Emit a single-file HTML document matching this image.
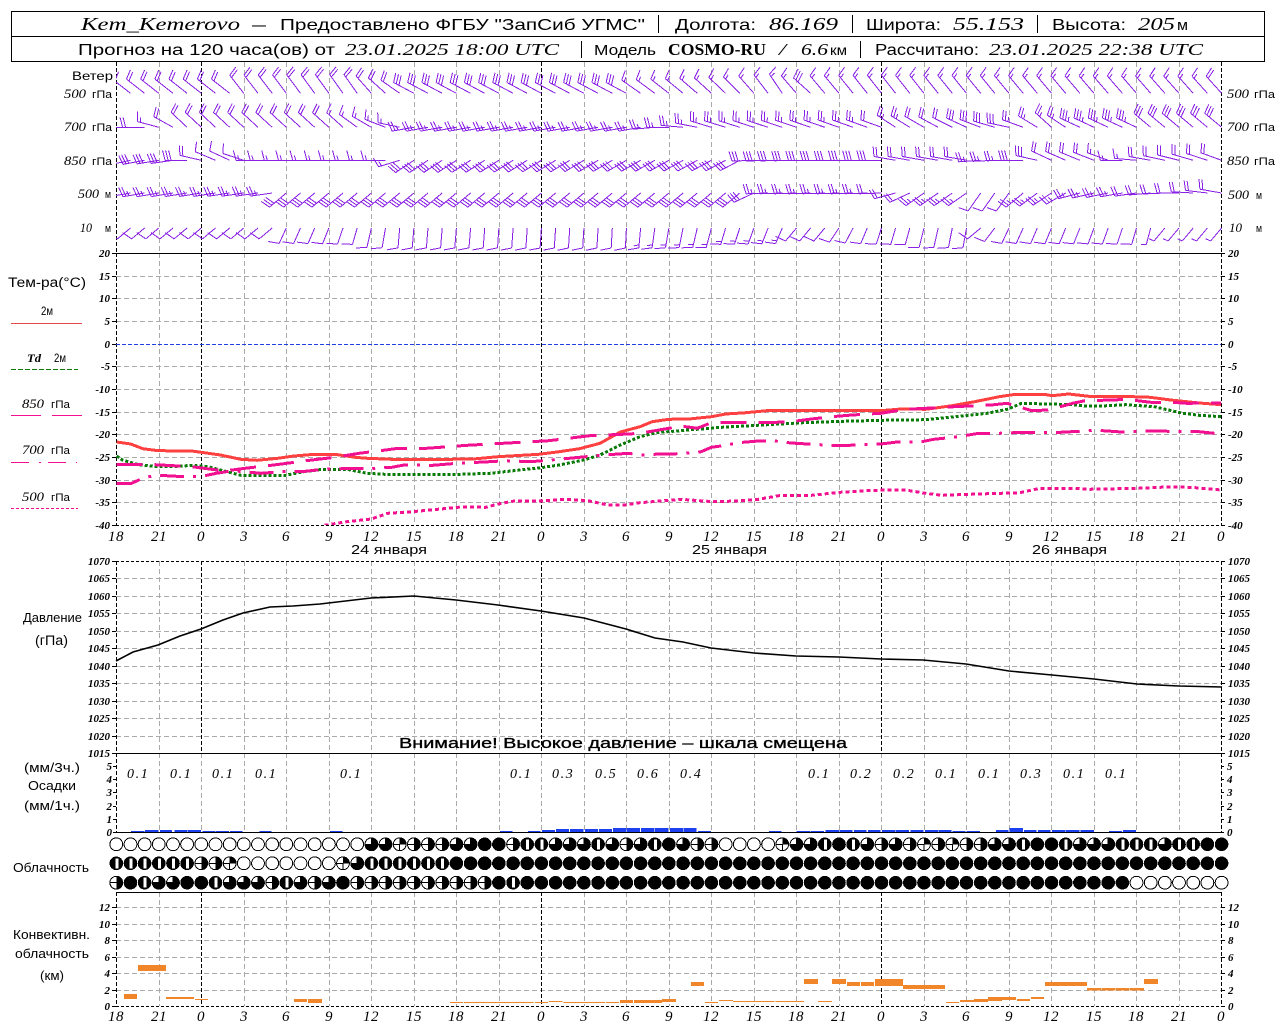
<!DOCTYPE html>
<html><head><meta charset="utf-8"><title>Kem_Kemerovo</title>
<style>
html,body{margin:0;padding:0;background:#fff}
svg{display:block}
text{fill:#000;white-space:pre}
.s{font-family:"Liberation Sans",sans-serif}
.i{font-family:"Liberation Serif",serif;font-style:italic}
.n{font-family:"Liberation Serif",serif;font-style:italic;font-weight:bold;font-size:11px}
.h{font-family:"Liberation Serif",serif;font-style:italic;font-size:15px;text-anchor:middle;letter-spacing:.5px}
.b{font-family:"Liberation Serif",serif;font-weight:bold}
.e{text-anchor:end}
.v{letter-spacing:1.6px}
</style></head><body>
<svg xmlns="http://www.w3.org/2000/svg" width="1280" height="1024" viewBox="0 0 1280 1024">
<defs><clipPath id="cw"><rect x="116" y="62" width="1106" height="190"/></clipPath>
<clipPath id="ct"><rect x="116" y="253" width="1106" height="272"/></clipPath></defs>
<rect width="1280" height="1024" fill="#fff"/>
<g id="grid" shape-rendering="crispEdges"></g>
<g id="data"></g>

<!-- header -->
<g shape-rendering="crispEdges" fill="none" stroke="#000">
<rect x="11.5" y="11.5" width="1253" height="50"/>
<line x1="11" y1="36.5" x2="1265" y2="36.5"/>
<line x1="658.5" y1="15" x2="658.5" y2="33"/><line x1="852.5" y1="15" x2="852.5" y2="33"/><line x1="1037.5" y1="15" x2="1037.5" y2="33"/>
<line x1="581.5" y1="41" x2="581.5" y2="58"/><line x1="860.5" y1="41" x2="860.5" y2="58"/>
</g>
<text class="i" x="81" y="30" font-size="18" textLength="159" lengthAdjust="spacingAndGlyphs">Kem_Kemerovo</text>
<text class="s" x="252" y="30" font-size="16" textLength="14" lengthAdjust="spacingAndGlyphs">–</text>
<text class="s" x="280" y="30" font-size="16" textLength="365" lengthAdjust="spacingAndGlyphs">Предоставлено ФГБУ "ЗапСиб УГМС"</text>
<text class="s" x="675" y="30" font-size="16" textLength="81" lengthAdjust="spacingAndGlyphs">Долгота:</text>
<text class="i" x="769" y="30" font-size="18" textLength="69" lengthAdjust="spacingAndGlyphs">86.169</text>
<text class="s" x="866" y="30" font-size="16" textLength="75" lengthAdjust="spacingAndGlyphs">Широта:</text>
<text class="i" x="953" y="30" font-size="18" textLength="71" lengthAdjust="spacingAndGlyphs">55.153</text>
<text class="s" x="1052" y="30" font-size="16" textLength="74" lengthAdjust="spacingAndGlyphs">Высота:</text>
<text class="i" x="1138" y="30" font-size="18" textLength="37" lengthAdjust="spacingAndGlyphs">205</text>
<text class="s" x="1177" y="30" font-size="15" textLength="11" lengthAdjust="spacingAndGlyphs">м</text>

<text class="s" x="78" y="55" font-size="15.5" textLength="257" lengthAdjust="spacingAndGlyphs">Прогноз на 120 часа(ов) от</text>
<text class="i" x="345" y="55" font-size="17" textLength="214" lengthAdjust="spacingAndGlyphs">23.01.2025 18:00 UTC</text>
<text class="s" x="594" y="55" font-size="15" textLength="62" lengthAdjust="spacingAndGlyphs">Модель</text>
<text class="b" x="668" y="55" font-size="16.5" textLength="98" lengthAdjust="spacingAndGlyphs">COSMO-RU</text>
<text class="i" x="779" y="55" font-size="17" textLength="7" lengthAdjust="spacingAndGlyphs">/</text>
<text class="i" x="801" y="55" font-size="17" textLength="27" lengthAdjust="spacingAndGlyphs">6.6</text>
<text class="s" x="830" y="55" font-size="14" textLength="17" lengthAdjust="spacingAndGlyphs">км</text>
<text class="s" x="875" y="55" font-size="15.5" textLength="104" lengthAdjust="spacingAndGlyphs">Рассчитано:</text>
<text class="i" x="989" y="55" font-size="17" textLength="214" lengthAdjust="spacingAndGlyphs">23.01.2025 22:38 UTC</text>

<!-- wind labels -->
<text class="s" x="72" y="80" font-size="12" textLength="41" lengthAdjust="spacingAndGlyphs">Ветер</text>
<text class="i" x="64" y="98" font-size="12.5" textLength="22" lengthAdjust="spacingAndGlyphs">500</text><text class="s" x="92" y="98" font-size="11" textLength="20" lengthAdjust="spacingAndGlyphs">гПа</text>
<text class="i" x="64" y="131" font-size="12.5" textLength="22" lengthAdjust="spacingAndGlyphs">700</text><text class="s" x="92" y="131" font-size="11" textLength="20" lengthAdjust="spacingAndGlyphs">гПа</text>
<text class="i" x="64" y="165" font-size="12.5" textLength="22" lengthAdjust="spacingAndGlyphs">850</text><text class="s" x="92" y="165" font-size="11" textLength="20" lengthAdjust="spacingAndGlyphs">гПа</text>
<text class="i" x="78" y="198" font-size="12.5" textLength="21" lengthAdjust="spacingAndGlyphs">500</text><text class="s" x="105" y="198" font-size="11" textLength="6" lengthAdjust="spacingAndGlyphs">м</text>
<text class="i" x="80" y="232" font-size="12.5" textLength="12" lengthAdjust="spacingAndGlyphs">10</text><text class="s" x="105" y="232" font-size="11" textLength="6" lengthAdjust="spacingAndGlyphs">м</text>
<text class="i" x="1227" y="98" font-size="12.5" textLength="22" lengthAdjust="spacingAndGlyphs">500</text><text class="s" x="1254" y="98" font-size="11" textLength="21" lengthAdjust="spacingAndGlyphs">гПа</text>
<text class="i" x="1227" y="131" font-size="12.5" textLength="22" lengthAdjust="spacingAndGlyphs">700</text><text class="s" x="1254" y="131" font-size="11" textLength="21" lengthAdjust="spacingAndGlyphs">гПа</text>
<text class="i" x="1227" y="165" font-size="12.5" textLength="22" lengthAdjust="spacingAndGlyphs">850</text><text class="s" x="1254" y="165" font-size="11" textLength="21" lengthAdjust="spacingAndGlyphs">гПа</text>
<text class="i" x="1228" y="199" font-size="12.5" textLength="21" lengthAdjust="spacingAndGlyphs">500</text><text class="s" x="1256" y="199" font-size="11" textLength="6" lengthAdjust="spacingAndGlyphs">м</text>
<text class="i" x="1229" y="232" font-size="12.5" textLength="13" lengthAdjust="spacingAndGlyphs">10</text><text class="s" x="1256" y="232" font-size="11" textLength="6" lengthAdjust="spacingAndGlyphs">м</text>

<!-- temp legend -->
<text class="s" x="8" y="287" font-size="13.5" textLength="78" lengthAdjust="spacingAndGlyphs">Тем-ра(°С)</text>
<text class="s" x="41" y="315" font-size="11.5" textLength="12" lengthAdjust="spacingAndGlyphs">2м</text>
<text class="i" font-weight="bold" x="27" y="362" font-size="12" textLength="14" lengthAdjust="spacingAndGlyphs">Td</text><text class="s" x="54" y="362" font-size="11.5" textLength="12" lengthAdjust="spacingAndGlyphs">2м</text>
<text class="i" x="22" y="408" font-size="12.5" textLength="22" lengthAdjust="spacingAndGlyphs">850</text><text class="s" x="51" y="408" font-size="11" textLength="19" lengthAdjust="spacingAndGlyphs">гПа</text>
<text class="i" x="22" y="454" font-size="12.5" textLength="22" lengthAdjust="spacingAndGlyphs">700</text><text class="s" x="51" y="454" font-size="11" textLength="19" lengthAdjust="spacingAndGlyphs">гПа</text>
<text class="i" x="22" y="501" font-size="12.5" textLength="22" lengthAdjust="spacingAndGlyphs">500</text><text class="s" x="51" y="501" font-size="11" textLength="19" lengthAdjust="spacingAndGlyphs">гПа</text>
<g shape-rendering="crispEdges" fill="none">
<line x1="11" x2="82" y1="323.5" y2="323.5" stroke="#e84848"/>
<line x1="11" x2="78" y1="369.5" y2="369.5" stroke="#087a08" stroke-dasharray="5 2"/>
<line x1="11" x2="41" y1="415.5" y2="415.5" stroke="#f01090"/><line x1="52" x2="82" y1="415.5" y2="415.5" stroke="#f01090"/>
<line x1="11" x2="77" y1="462.5" y2="462.5" stroke="#f01090" stroke-dasharray="18 10 2 7"/>
<line x1="11" x2="78" y1="508.5" y2="508.5" stroke="#f01090" stroke-dasharray="3 2"/>
</g>

<!-- temp axis -->
<g class="n e">
<text x="110" y="257">20</text><text x="110" y="280">15</text><text x="110" y="302">10</text><text x="110" y="325">5</text><text x="110" y="348">0</text><text x="110" y="370">-5</text><text x="110" y="393">-10</text><text x="110" y="416">-15</text><text x="110" y="438">-20</text><text x="110" y="461">-25</text><text x="110" y="484">-30</text><text x="110" y="506">-35</text><text x="110" y="529">-40</text>
</g>
<g class="n">
<text x="1228" y="257">20</text><text x="1228" y="280">15</text><text x="1228" y="302">10</text><text x="1228" y="325">5</text><text x="1228" y="348">0</text><text x="1228" y="370">-5</text><text x="1228" y="393">-10</text><text x="1228" y="416">-15</text><text x="1228" y="438">-20</text><text x="1228" y="461">-25</text><text x="1228" y="484">-30</text><text x="1228" y="506">-35</text><text x="1228" y="529">-40</text>
</g>

<!-- hours under temperature -->
<g class="h">
<text x="116" y="541">18</text><text x="159" y="541">21</text><text x="201" y="541">0</text><text x="244" y="541">3</text><text x="286" y="541">6</text><text x="329" y="541">9</text><text x="371" y="541">12</text><text x="414" y="541">15</text><text x="456" y="541">18</text><text x="499" y="541">21</text><text x="541" y="541">0</text><text x="584" y="541">3</text><text x="626" y="541">6</text><text x="669" y="541">9</text><text x="711" y="541">12</text><text x="754" y="541">15</text><text x="796" y="541">18</text><text x="839" y="541">21</text><text x="881" y="541">0</text><text x="924" y="541">3</text><text x="966" y="541">6</text><text x="1009" y="541">9</text><text x="1051" y="541">12</text><text x="1094" y="541">15</text><text x="1136" y="541">18</text><text x="1179" y="541">21</text><text x="1221" y="541">0</text>
</g>
<text class="s" x="351" y="554" font-size="13" textLength="76" lengthAdjust="spacingAndGlyphs">24 января</text>
<text class="s" x="692" y="554" font-size="13" textLength="75" lengthAdjust="spacingAndGlyphs">25 января</text>
<text class="s" x="1032" y="554" font-size="13" textLength="75" lengthAdjust="spacingAndGlyphs">26 января</text>

<!-- pressure -->
<text class="s" x="23" y="622" font-size="13" textLength="59" lengthAdjust="spacingAndGlyphs">Давление</text>
<text class="s" x="35" y="645" font-size="13.5" textLength="33" lengthAdjust="spacingAndGlyphs">(гПа)</text>
<g class="n e">
<text x="110" y="565">1070</text><text x="110" y="582">1065</text><text x="110" y="600">1060</text><text x="110" y="617">1055</text><text x="110" y="635">1050</text><text x="110" y="652">1045</text><text x="110" y="670">1040</text><text x="110" y="687">1035</text><text x="110" y="705">1030</text><text x="110" y="722">1025</text><text x="110" y="740">1020</text><text x="110" y="757">1015</text>
</g>
<g class="n">
<text x="1228" y="565">1070</text><text x="1228" y="582">1065</text><text x="1228" y="600">1060</text><text x="1228" y="617">1055</text><text x="1228" y="635">1050</text><text x="1228" y="652">1045</text><text x="1228" y="670">1040</text><text x="1228" y="687">1035</text><text x="1228" y="705">1030</text><text x="1228" y="722">1025</text><text x="1228" y="740">1020</text><text x="1228" y="757">1015</text>
</g>
<text class="s" x="399" y="748" font-size="15" stroke="#000" stroke-width=".35" textLength="448" lengthAdjust="spacingAndGlyphs">Внимание! Высокое давление – шкала смещена</text>

<!-- precipitation -->
<text class="s" x="24" y="772" font-size="13" textLength="56" lengthAdjust="spacingAndGlyphs">(мм/3ч.)</text>
<text class="s" x="28" y="790" font-size="13" textLength="48" lengthAdjust="spacingAndGlyphs">Осадки</text>
<text class="s" x="24" y="810" font-size="13" textLength="56" lengthAdjust="spacingAndGlyphs">(мм/1ч.)</text>
<g class="n e">
<text x="112" y="770">5</text><text x="112" y="783">4</text><text x="112" y="796">3</text><text x="112" y="810">2</text><text x="112" y="823">1</text><text x="112" y="836">0</text>
</g>
<g class="n">
<text x="1227" y="770">5</text><text x="1227" y="783">4</text><text x="1227" y="796">3</text><text x="1227" y="810">2</text><text x="1227" y="823">1</text><text x="1227" y="836">0</text>
</g>
<g class="i v" font-size="14">
<text x="127" y="778">0.1</text><text x="170" y="778">0.1</text><text x="212" y="778">0.1</text><text x="255" y="778">0.1</text><text x="340" y="778">0.1</text><text x="510" y="778">0.1</text><text x="552" y="778">0.3</text><text x="595" y="778">0.5</text><text x="637" y="778">0.6</text><text x="680" y="778">0.4</text><text x="808" y="778">0.1</text><text x="850" y="778">0.2</text><text x="893" y="778">0.2</text><text x="935" y="778">0.1</text><text x="978" y="778">0.1</text><text x="1020" y="778">0.3</text><text x="1063" y="778">0.1</text><text x="1105" y="778">0.1</text>
</g>

<text class="s" x="13" y="872" font-size="13" textLength="76" lengthAdjust="spacingAndGlyphs">Облачность</text>

<!-- convective -->
<text class="s" x="13" y="939" font-size="12.5" textLength="77" lengthAdjust="spacingAndGlyphs">Конвективн.</text>
<text class="s" x="15" y="958" font-size="12.5" textLength="74" lengthAdjust="spacingAndGlyphs">облачность</text>
<text class="s" x="40" y="980" font-size="13" textLength="24" lengthAdjust="spacingAndGlyphs">(км)</text>
<g class="n e">
<text x="110" y="911">12</text><text x="110" y="928">10</text><text x="110" y="944">8</text><text x="110" y="961">6</text><text x="110" y="977">4</text><text x="110" y="994">2</text><text x="110" y="1010">0</text>
</g>
<g class="n">
<text x="1228" y="911">12</text><text x="1228" y="928">10</text><text x="1228" y="944">8</text><text x="1228" y="961">6</text><text x="1228" y="977">4</text><text x="1228" y="994">2</text><text x="1228" y="1010">0</text>
</g>
<g class="h">
<text x="116" y="1021">18</text><text x="159" y="1021">21</text><text x="201" y="1021">0</text><text x="244" y="1021">3</text><text x="286" y="1021">6</text><text x="329" y="1021">9</text><text x="371" y="1021">12</text><text x="414" y="1021">15</text><text x="456" y="1021">18</text><text x="499" y="1021">21</text><text x="541" y="1021">0</text><text x="584" y="1021">3</text><text x="626" y="1021">6</text><text x="669" y="1021">9</text><text x="711" y="1021">12</text><text x="754" y="1021">15</text><text x="796" y="1021">18</text><text x="839" y="1021">21</text><text x="881" y="1021">0</text><text x="924" y="1021">3</text><text x="966" y="1021">6</text><text x="1009" y="1021">9</text><text x="1051" y="1021">12</text><text x="1094" y="1021">15</text><text x="1136" y="1021">18</text><text x="1179" y="1021">21</text><text x="1221" y="1021">0</text>
</g>
</svg>
<script>
(function(){
var G='',D='';
function L(x1,y1,x2,y2,c,d){return '<line x1="'+x1+'" y1="'+y1+'" x2="'+x2+'" y2="'+y2+'" stroke="'+c+'"'+(d?' stroke-dasharray="'+d+'"':'')+'/>';}
function vx(k){return Math.round(116.3+42.5*k)+.5;}
var bands=[[62,253],[253,525],[561,753],[753,832],[892,1006]];
var i,k,v,y;
/* horizontal grid */
for(v=15;v>=-35;v-=5){ if(v==0)continue; y=Math.round(343.7-v*4.533)+.5; G+=L(116,y,1221,y,'#aaa','5 3'); }
for(v=1;v<=10;v++){ y=Math.round(561+v*17.45)+.5; G+=L(116,y,1221,y,'#aaa','5 3'); }
for(v=2;v<=12;v+=2){ y=Math.round(1006-v*8.25)+.5; G+=L(116,y,1221,y,'#aaa','5 3'); }
/* vertical grid */
bands.forEach(function(b){
 for(k=0;k<=26;k++){
  var blk=(k==0||k==2||k==10||k==18||k==26);
  if(b[0]==753&&blk&&k!=0&&k!=26){G+=L(vx(k),b[0],vx(k),b[1],'#aaa','5 3');continue;}
  G+=L(vx(k),b[0],vx(k),b[1],blk?'#000':'#aaa',blk?'4 2':'5 3');
 }
});
/* zero */
G+=L(116,344.5,1221,344.5,'#2040e0','4 2');
/* frames */
G+=L(116,253.5,1222,253.5,'#000');
G+=L(116,525.5,1222,525.5,'#000','3 2');
G+=L(116,561.5,1222,561.5,'#000','3 2');
G+=L(116,753.5,1222,753.5,'#000');
G+=L(116,832.5,1222,832.5,'#000');
G+=L(116,892.5,1222,892.5,'#000');
G+=L(116,1006.5,1222,1006.5,'#000','3 2');
/* axis ticks */
for(v=20;v>=-40;v-=5){y=Math.round(343.7-v*4.533)+.5;G+=L(112,y,116,y,'#000')+L(1221,y,1225,y,'#000');}
for(v=0;v<=11;v++){y=Math.round(561+v*17.45)+.5;G+=L(112,y,116,y,'#000')+L(1221,y,1225,y,'#000');}
for(v=0;v<=5;v++){y=Math.round(832-v*13.2)+.5;G+=L(113,y,116,y,'#000')+L(1221,y,1224,y,'#000');}
for(v=0;v<=12;v+=2){y=Math.round(1006-v*8.25)+.5;G+=L(112,y,116,y,'#000')+L(1221,y,1225,y,'#000');}
document.getElementById('grid').innerHTML=G;

/* wind barbs */
function barbs(by,keys,base){
 var out='',idx=0;
 for(var i=1;i<=78;i++){
  while(idx<keys.length-1&&keys[idx+1][0]<=i)idx++;
  var a=keys[idx],b=keys[Math.min(idx+1,keys.length-1)],ang=a[1];
  if(b[0]>a[0])ang=a[1]+(b[1]-a[1])*(i-a[0])/(b[0]-a[0]);
  var f=a[2],x=116.3+14.17*i,len=base;
  if(by>220)len=ang<105?20:17;
  var r=ang*Math.PI/180,dx=Math.cos(r),dy=Math.sin(r);
  var ex=x+dx*len,ey=by+dy*len;
  var p='M'+x.toFixed(1)+' '+by+'L'+ex.toFixed(1)+' '+ey.toFixed(1);
  var r2=(ang+75)*Math.PI/180,fx=Math.cos(r2),fy=Math.sin(r2);
  var pos=0,full=Math.floor(f/2),hf=f%2,fl=by>220?11:10;
  for(var n=0;n<full+hf;n++){
    var sx=ex-dx*pos,sy=ey-dy*pos,l=n<full?fl:fl/2;
    p+='M'+sx.toFixed(1)+' '+sy.toFixed(1)+'L'+(sx+fx*l).toFixed(1)+' '+(sy+fy*l).toFixed(1);
    pos+=3;
  }
  out+=p;
 }
 return out;
}
var w500=[[1,218,4],[8,218,4],[9,232,4],[17,235,4],[19,222,4],[21,208,6],[36,208,6],[37,215,3],[44,225,3],[47,236,3],[49,222,6],[50,230,3],[54,232,3],[78,228,4]];
var w700=[[1,180,6],[2,180,4],[3,195,3],[4,209,4],[5,223,4],[16,222,3],[18,210,3],[20,192,3],[21,170,5],[37,170,5],[40,185,5],[42,197,5],[54,200,4],[55,213,5],[57,210,4],[60,205,6],[63,192,6],[64,200,5],[66,222,5],[68,205,7],[72,205,7],[73,220,6],[78,220,6]];
var w850=[[1,168,6],[4,172,6],[5,180,6],[6,193,4],[7,203,2],[8,205,2],[9,198,2],[10,180,3],[19,180,3],[21,146,6],[44,152,6],[45,178,6],[54,180,6],[55,190,4],[60,190,4],[61,176,5],[64,180,6],[66,205,4],[70,200,3],[71,180,3],[73,190,4],[78,200,4]];
var wm=[[1,170,5],[11,172,5],[12,140,6],[44,140,6],[45,155,6],[46,178,5],[54,178,4],[55,165,4],[57,145,5],[60,145,5],[61,125,2],[63,125,2],[64,140,5],[67,150,5],[68,165,5],[72,172,4],[75,180,4],[78,190,4]];
var w10=[[1,140,2],[11,140,2],[12,115,2],[15,112,2],[19,100,2],[20,95,2],[36,93,2],[37,95,3],[39,100,3],[47,113,3],[48,130,2],[50,130,2],[52,118,2],[54,108,2],[60,100,2],[61,140,2],[63,115,2],[70,110,2],[73,105,1],[74,130,1],[78,130,1]];
D+='<path clip-path="url(#cw)" shape-rendering="crispEdges" fill="none" stroke="#8a1fe6" stroke-width="1" d="'+barbs(93.3,w500,23)+barbs(127.3,w700,22)+barbs(160.3,w850,22)+barbs(193,wm,22)+barbs(228,w10,17)+'"/>';

/* series helpers */
function P(a,off){var s=[];for(var i=0;i<a.length;i+=2){s.push((off+a[i]/2.45).toFixed(1)+','+(370+a[i+1]/3).toFixed(1));}return s.join(' ');}
function S(a3,a4,c,w,d){return '<polyline clip-path="url(#ct)" shape-rendering="crispEdges" fill="none" stroke="'+c+'" stroke-width="'+w+'"'+(d?' stroke-dasharray="'+d+'"':'')+' points="'+P(a3,0)+' '+P(a4,640)+'"/>';}
var red3=[286,216,320,222,350,236,380,241,420,243,470,243,500,248,540,255,590,268,630,271,680,265,720,258,770,253,820,253,870,262,900,265,960,268,1100,268,1160,267,1220,260,1320,253,1370,245,1420,236,1470,220,1520,186,1568,170];
var red4=[30,155,70,148,120,147,175,140,210,132,260,128,310,122,590,122,640,117,700,118,760,108,820,95,880,80,920,73,990,73,1010,77,1050,72,1100,79,1180,79,1250,82,1300,90,1370,99,1424,104];
var gr3=[286,258,300,270,340,284,380,289,440,289,470,286,510,290,540,300,590,316,700,316,740,306,790,298,850,298,900,310,960,314,1100,314,1200,310,1320,294,1370,285,1430,270,1470,255,1520,225,1568,200];
var gr4=[40,188,140,178,200,172,300,165,400,158,500,154,590,151,700,149,770,140,850,130,900,118,935,100,1000,102,1060,104,1090,108,1130,108,1190,104,1260,110,1330,130,1370,136,1424,140];
var a3=[286,283,380,284,470,290,550,303,600,295,650,288,690,282,750,272,820,262,880,250,945,240,975,235,1045,235,1145,226,1245,219,1345,212,1445,197,1540,192];
var a4=[0,190,70,175,100,168,140,175,175,158,270,158,310,158,370,155,420,147,470,140,520,135,590,130,650,118,700,115,770,110,860,105,900,100,960,122,1000,120,1060,100,1090,92,1160,90,1190,88,1260,98,1290,96,1340,100,1424,99];
var b3=[286,341,320,341,355,322,390,316,450,320,490,320,530,310,570,302,640,310,690,305,740,305,790,298,840,296,900,296,960,292,990,285,1060,286,1120,280,1200,275,1240,272,1300,275,1350,270,1420,262,1480,255,1540,250,1568,255];
var b4=[50,252,80,252,130,248,150,245,175,232,210,226,240,218,290,213,325,212,370,219,440,224,490,227,590,222,630,216,690,215,720,208,780,200,830,190,880,190,940,187,1030,187,1120,181,1180,186,1240,183,1300,184,1360,184,1424,192];
var c3=[795,466,850,455,910,447,950,430,1010,425,1080,417,1130,411,1190,412,1220,402,1260,393,1320,393,1390,388,1440,392,1490,405,1530,405,1568,398];
var c4=[100,388,180,395,240,393,290,388,340,377,420,376,490,367,570,361,650,360,700,370,740,376,830,372,930,368,975,356,1060,355,1100,358,1220,355,1290,351,1350,352,1424,360];
D+=S(red3,red4,'#ff4040',3);
D+=S(gr3,gr4,'#087a08',3,'3 2');
D+=S(c3,c4,'#f01090',3,'4 3');
D+=S(b3,b4,'#f01090',3,'24 9 3 9');
D+=S(a3,a4,'#f01090',3,'26 12');

/* pressure */
D+='<polyline fill="none" stroke="#000" stroke-width="1.6" points="116,661 133,652 158,645 180,636 201,629 223,620 243,613 270,607 293,606 320,604 371,598 414,596 456,600 498,605 541,611 584,618 626,629 655,638 683,642 711,648 754,653 796,656 839,657 881,659 923,660 966,664 1009,671 1052,675 1094,679 1137,684 1179,686 1222,687"/>';

/* precip bars */
var R='';
function bars(off,arr){for(var i=0;i<arr.length;i+=3){R+='<rect x="'+(off+arr[i]/3).toFixed(1)+'" y="'+(832-arr[i+2])+'" width="'+((arr[i+1]-arr[i])/3).toFixed(1)+'" height="'+arr[i+2]+'"/>';}}
bars(0,[393,433,1,435,475,2,480,516,2,523,562,2,564,603,2,607,645,1,647,687,1,690,728,1,778,815,1,990,1028,1]);
bars(420,[240,278,1,324,362,1,366,405,2,408,447,3,450,490,3,495,534,3,537,576,3,579,618,4,620,660,4,663,702,4,704,746,4,750,789,4,791,830,4,834,873,1,1047,1085,1,1130,1170,1,1172,1212,1,1217,1258,2]);
bars(840,[0,38,2,42,80,2,84,122,2,126,165,2,167,207,2,212,250,2,255,295,2,297,335,2,338,377,1,380,420,1,468,506,2,509,549,4,552,590,2,594,632,2,636,676,2,678,718,2,722,762,2,807,846,1,849,888,2]);
D+='<g fill="#1c40f0" shape-rendering="crispEdges">'+R+'</g>';

/* conv bars */
R='';
function cb(off,arr){for(var i=0;i<arr.length;i+=4){R+='<rect x="'+(off+arr[i]/2.45).toFixed(1)+'" y="'+(890+arr[i+2]/3).toFixed(1)+'" width="'+((arr[i+1]-arr[i])/2.45).toFixed(1)+'" height="'+((arr[i+3]-arr[i+2])/3).toFixed(1)+'"/>';}}
cb(0,[304,336,312,327,338,407,225,243,407,475,321,327,478,510,327,330,720,752,327,336,755,789,327,339,1102,1134,336,339,1137,1307,336,339,1311,1343,336,339,1345,1378,333,336,1380,1482,336,339,1485,1517,336,339,1519,1551,330,339,1553,1568,330,339]);
cb(640,[0,54,330,339,54,88,327,336,125,157,276,288,159,191,336,339,193,228,330,333,228,330,333,336,332,366,333,336,366,402,333,336,402,436,267,282,436,470,333,336,470,505,267,282,507,539,276,288,541,573,276,288,576,644,267,288,644,747,285,297,750,782,336,339,784,818,330,336,818,852,327,336,853,887,321,333,887,921,321,330,924,955,327,333,958,990,321,327,992,1095,276,288,1095,1129,294,301,1131,1165,294,301,1166,1199,294,301,1200,1235,294,301,1235,1269,267,282]);
D+='<g fill="#f0852a" shape-rendering="crispEdges">'+R+'</g>';

/* clouds */
var r1='OOOOOOOOOOOOOOOOOOTTQH'+'HHTTFFHVVTTTVTHTVFTHHOOOOQTTVF'+'VTHTHQHQHHTTVFFVTTTVVVTVVFF';
var r2='VVVVVVHHQOOOOOOOQTVVVV'+'VV'+new Array(56).join('F');
var r3='HFVTTFFVTTTHVTHTFHHHHH'+'HHHHHFV'+new Array(44).join('F')+'OOOOOOO';
function cloud(x,y,t){
 var R=6.4,s='';
 if(t=='F')return '<circle cx="'+x+'" cy="'+y+'" r="'+(R+.4)+'" fill="#000"/>';
 if(t=='V')return '<circle cx="'+x+'" cy="'+y+'" r="'+(R+.4)+'" fill="#000"/><rect x="'+(x-1)+'" y="'+(y-5)+'" width="3" height="10" fill="#fff"/>';
 s='<circle cx="'+x+'" cy="'+y+'" r="'+R+'" fill="#fff" stroke="#000"/>';
 if(t=='T')s+='<path d="M'+x+' '+y+'V'+(y-R)+'A'+R+' '+R+' 0 1 1 '+(x-R)+' '+y+'Z" fill="#000"/><path d="M'+x+' '+y+'H'+(x-R)+'M'+x+' '+y+'V'+(y-R)+'" stroke="#000"/>';
 if(t=='Q')s+='<path d="M'+x+' '+y+'V'+(y-R)+'A'+R+' '+R+' 0 0 1 '+(x+R)+' '+y+'Z" fill="#000"/><path d="M'+x+' '+y+'H'+(x-R)+'M'+x+' '+y+'V'+(y+R)+'" stroke="#000"/>';
 if(t=='H')s+='<path d="M'+x+' '+(y-R)+'A'+R+' '+R+' 0 0 1 '+x+' '+(y+R)+'Z" fill="#000"/><path d="M'+x+' '+y+'H'+(x-R)+'" stroke="#000"/>';
 return s;
}
var cs='';
[[r1,844.3],[r2,863.3],[r3,882.7]].forEach(function(o){
 for(var i=0;i<79;i++){cs+=cloud(+(116.3+14.17*i).toFixed(1),o[1],o[0].charAt(i)||'F');}
});
D+='<g shape-rendering="crispEdges">'+cs+'</g>';
document.getElementById('data').innerHTML=D;
})();
</script>
</body></html>
